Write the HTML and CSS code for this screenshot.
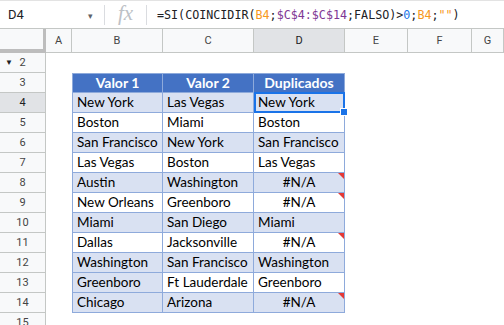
FILE: index.html
```html
<!DOCTYPE html>
<html>
<head>
    <title>Duplicados</title>
    <link rel="stylesheet" href="styles.css">
</head>
<body>
    <div class="formula-bar">
        <div class="name-box">D4</div>
        <div class="name-arrow">&#9662;</div>
        <div class="sep"></div>
        <div class="fx">fx</div>
        <div class="sep"></div>
        <div class="formula">=SI(COINCIDIR(<span class="ref1">B4</span>;<span class="ref2">$C$4:$C$14</span>;FALSO)&gt;<span class="num">0</span>;<span class="ref1">B4</span>;<span class="str">""</span>)</div>
    </div>

    <div class="sheet">
        <div class="row head-row">
            <div class="corner"></div>
            <div class="col-head">A</div>
            <div class="col-head">B</div>
            <div class="col-head">C</div>
            <div class="col-head active">D</div>
            <div class="col-head">E</div>
            <div class="col-head">F</div>
            <div class="col-head">G</div>
        </div>
        <div class="row">
            <div class="row-head"><span class="tri">&#9660;</span>2</div>
        </div>
        <div class="row">
            <div class="row-head">3</div>
            <div></div>
            <div class="cell th first">Valor 1</div>
            <div class="cell th">Valor 2</div>
            <div class="cell th">Duplicados</div>
        </div>
        <div class="row">
            <div class="row-head active">4</div>
            <div></div>
            <div class="cell band first">New York</div>
            <div class="cell band">Las Vegas</div>
            <div class="cell band selected">New York<span class="handle"></span></div>
        </div>
        <div class="row">
            <div class="row-head">5</div>
            <div></div>
            <div class="cell first">Boston</div>
            <div class="cell">Miami</div>
            <div class="cell">Boston</div>
        </div>
        <div class="row">
            <div class="row-head">6</div>
            <div></div>
            <div class="cell band first">San Francisco</div>
            <div class="cell band">New York</div>
            <div class="cell band">San Francisco</div>
        </div>
        <div class="row">
            <div class="row-head">7</div>
            <div></div>
            <div class="cell first">Las Vegas</div>
            <div class="cell">Boston</div>
            <div class="cell">Las Vegas</div>
        </div>
        <div class="row">
            <div class="row-head">8</div>
            <div></div>
            <div class="cell band first">Austin</div>
            <div class="cell band">Washington</div>
            <div class="cell band err">#N/A</div>
        </div>
        <div class="row">
            <div class="row-head">9</div>
            <div></div>
            <div class="cell first">New Orleans</div>
            <div class="cell">Greenboro</div>
            <div class="cell err">#N/A</div>
        </div>
        <div class="row">
            <div class="row-head">10</div>
            <div></div>
            <div class="cell band first">Miami</div>
            <div class="cell band">San Diego</div>
            <div class="cell band">Miami</div>
        </div>
        <div class="row">
            <div class="row-head">11</div>
            <div></div>
            <div class="cell first">Dallas</div>
            <div class="cell">Jacksonville</div>
            <div class="cell err">#N/A</div>
        </div>
        <div class="row">
            <div class="row-head">12</div>
            <div></div>
            <div class="cell band first">Washington</div>
            <div class="cell band">San Francisco</div>
            <div class="cell band">Washington</div>
        </div>
        <div class="row">
            <div class="row-head">13</div>
            <div></div>
            <div class="cell band first">Greenboro</div>
            <div class="cell">Ft Lauderdale</div>
            <div class="cell">Greenboro</div>
        </div>
        <div class="row">
            <div class="row-head">14</div>
            <div></div>
            <div class="cell band first">Chicago</div>
            <div class="cell band">Arizona</div>
            <div class="cell band err">#N/A</div>
        </div>
        <div class="row">
            <div class="row-head">15</div>
        </div>
    </div>
</body>
</html>
```

FILE: styles.css
```css
body {
    margin: 0;
    font-family: Roboto, Arial, sans-serif;
    background: #fff;
    overflow: hidden;
}
.formula-bar {
    height: 28px;
    box-sizing: border-box;
    border-top: 1px solid #e3e3e3;
    display: flex;
    align-items: center;
}
.name-box {
    width: 80px;
    padding-left: 8px;
    font-size: 13px;
    color: #202124;
}
.name-arrow {
    width: 16px;
    font-size: 9px;
    color: #5f6368;
    margin-top: 2px;
}
.sep {
    width: 1px;
    height: 20px;
    background: #dadce0;
}
.fx {
    width: 41px;
    text-align: center;
    font-family: "Liberation Serif", serif;
    font-style: italic;
    font-size: 21px;
    color: #bdc1c6;
    margin-top: -3px;
}
.formula {
    padding-left: 10px;
    font-family: "DejaVu Sans Mono", monospace;
    font-size: 11.7px;
    color: #202124;
}
.ref1 { color: #f7981d; }
.ref2 { color: #7e3794; }
.num { color: #1a73e8; }
.str { color: #f7981d; }

.row {
    display: grid;
    grid-template-columns: 46px 26px 91px 91px 91px 63px 64px 1fr;
    height: 20px;
}
.head-row {
    height: 24px;
    border-top: 1px solid #c4c7c5;
}
.corner {
    background: #f8f9fa;
    border-right: 4px solid #bdbdbd;
    border-bottom: 4px solid #bdbdbd;
    margin-right: -1px;
}
.col-head {
    background: #f8f9fa;
    border-right: 1px solid #c4c7c5;
    border-bottom: 1px solid #c4c7c5;
    font-size: 11px;
    color: #444;
    display: flex;
    align-items: center;
    justify-content: center;
}
.col-head.active,
.row-head.active {
    background: #e1e3e6;
    color: #202124;
}
.row-head {
    position: relative;
    background: #f8f9fa;
    border-right: 1px solid #c4c7c5;
    border-bottom: 1px solid #c4c7c5;
    font-size: 11px;
    color: #444;
    display: flex;
    align-items: center;
    justify-content: center;
}
.tri {
    position: absolute;
    left: 5px;
    top: 5px;
    font-size: 8px;
    color: #202124;
}

.cell {
    position: relative;
    box-sizing: border-box;
    border-right: 1px solid #8eaadb;
    border-bottom: 1px solid #8eaadb;
    padding: 0 4px;
    font-family: Lato, "Open Sans", sans-serif;
    font-size: 13.5px;
    color: #000;
    line-height: 19px;
    white-space: nowrap;
}
.cell.first {
    border-left: 1px solid #8eaadb;
}
.cell.th {
    background: #4472c4;
    border-top: 1px solid #8eaadb;
    color: #fff;
    font-weight: bold;
    font-size: 14px;
    text-align: center;
    line-height: 18px;
}
.cell.band {
    background: #d9e1f2;
}
.cell.err {
    text-align: center;
}
.cell.err::after {
    content: "";
    position: absolute;
    top: 0;
    right: 0;
    border-top: 6px solid #e53935;
    border-left: 6px solid transparent;
}
.cell.selected::after {
    content: "";
    position: absolute;
    left: 0;
    top: -1px;
    right: -1px;
    bottom: -1px;
    border: 2px solid #1a73e8;
}
.handle {
    position: absolute;
    right: -4px;
    bottom: -4px;
    width: 6px;
    height: 6px;
    background: #1a73e8;
    border: 1px solid #fff;
    z-index: 2;
}
```
